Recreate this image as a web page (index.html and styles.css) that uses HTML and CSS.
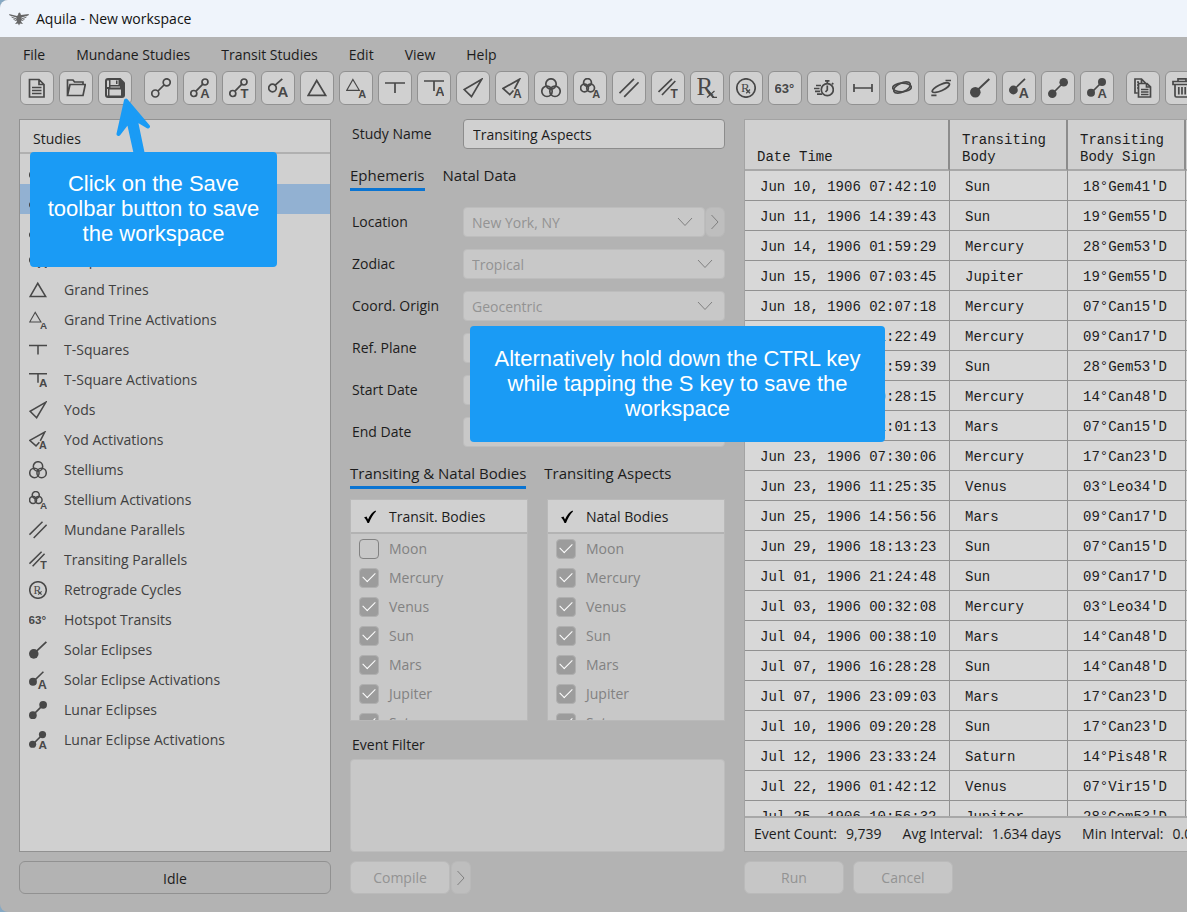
FILE: index.html
```html
<!DOCTYPE html>
<html lang="en">
<head>
    <meta charset="UTF-8">
    <meta name="viewport" content="width=device-width, initial-scale=1.0">
    <title>Aquila - New workspace</title>
    <link rel="stylesheet" href="styles.css">
</head>
<body>
    <!-- Icon set -->
    <svg class="icon-defs" aria-hidden="true">
        <symbol id="i-doc" viewBox="0 0 20 20"><path d="M2.5 1.5H12L17 6.500V19H2.500ZM12 1.500V6.500H17M5 9.500H14.500M5 12.500H14.500M5 15.500H14.500"/></symbol>
        <symbol id="i-open" viewBox="0 0 20 20"><path d="M1.500 17V2H7L8.500 4H17V6.500M1.500 17.500L4 6.500H19.300L17 17.500Z"/></symbol>
        <symbol id="i-save" viewBox="0 0 20 20"><path class="solid" d="M3 0H15.500L20 4.500V17A3 3 0 0 1 17 20H3A3 3 0 0 1 0 17V3A3 3 0 0 1 3 0Z"/><path class="paper" d="M2 2.500H4V9H2ZM5.500 2H13.500V7H5.500ZM2 11H3V17.500H2ZM4.500 11.500H16V17.500H4.500ZM5.500 8.500H15V9.500H5.500Z"/><path class="solid" d="M11 2.500H12.500V6H11Z"/></symbol>
        <symbol id="i-conj" viewBox="0 0 20 20"><circle cx="4.300" cy="15.500" r="3.500"/><circle cx="15.700" cy="4.300" r="3.500"/><path d="M7 13L13 7"/></symbol>
        <symbol id="i-conj-a" viewBox="0 0 20 20"><circle cx="3.800" cy="15.500" r="3"/><circle cx="15" cy="4" r="3"/><path d="M6 13.200L12.800 6.200"/><text x="10.300" y="19.800" font-size="13">A</text></symbol>
        <symbol id="i-conj-t" viewBox="0 0 20 20"><circle cx="3.800" cy="15.500" r="3"/><circle cx="15" cy="4" r="3"/><path d="M6 13.200L12.800 6.200"/><text x="11.500" y="19.800" font-size="13">T</text></symbol>
        <symbol id="i-open-a" viewBox="0 0 20 20"><circle cx="4.500" cy="10" r="3.800"/><path d="M7.200 7.200L14.300 .8"/><text x="9.400" y="19.300" font-size="15">A</text></symbol>
        <symbol id="i-tri" viewBox="0 0 20 20"><path d="M9.700 2.500L18.600 17.300H1.200Z"/></symbol>
        <symbol id="i-tri-a" viewBox="0 0 20 20"><path class="thin" d="M6.900 1.500L13.300 12.300H.8Z"/><text x="12.300" y="20" font-size="11">A</text></symbol>
        <symbol id="i-tsq" viewBox="0 0 20 20"><path d="M0 5H20M10 5V15"/></symbol>
        <symbol id="i-tsq-a" viewBox="0 0 20 20"><path d="M0 3H20M10 3V13"/><text x="11.200" y="17.800" font-size="13">A</text></symbol>
        <symbol id="i-yod" viewBox="0 0 20 20"><path d="M18.800 1.200L1.200 11.500L8.500 18.600Z"/></symbol>
        <symbol id="i-yod-a" viewBox="0 0 20 20"><path d="M11.500 12.500L7.800 16.600L1 10.500L17.500 1.200L12.500 11"/><text x="11" y="20" font-size="12">A</text></symbol>
        <symbol id="i-stel" viewBox="0 0 20 20"><circle cx="10" cy="6" r="5.200"/><circle cx="6" cy="13.300" r="5.200"/><circle cx="14" cy="13.300" r="5.200"/></symbol>
        <symbol id="i-stel-a" viewBox="0 0 20 20"><circle cx="7.500" cy="4.500" r="3.900"/><circle cx="4.500" cy="10" r="3.900"/><circle cx="10.600" cy="10" r="3.900"/><text x="12.300" y="20" font-size="11">A</text></symbol>
        <symbol id="i-par" viewBox="0 0 20 20"><path d="M.5 15.200L15 .8M5.200 18.800L19.600 4.300"/></symbol>
        <symbol id="i-par-t" viewBox="0 0 20 20"><path d="M.5 14L14 .8M4 17L17.300 3"/><text x="12.400" y="19.900" font-size="12">T</text></symbol>
        <symbol id="i-rx" viewBox="0 0 20 20"><text class="serif" x="-.5" y="17" font-size="25">R</text><path class="thin" d="M10 19.500L17.500 13M15.500 19.300H20"/><path class="bold" d="M11 13L16.500 19.500"/></symbol>
        <symbol id="i-retro" viewBox="0 0 20 20"><circle cx="10" cy="10" r="9.200"/><text class="serif" x="4.900" y="14.300" font-size="13">R</text><path class="thin" d="M10.200 15.200L14 11.500M10.500 11.800L14 15.200"/></symbol>
        <symbol id="i-deg" viewBox="0 0 20 20"><text x="-.5" y="14.500" font-size="13">63°</text></symbol>
        <symbol id="i-timer" viewBox="0 0 20 20"><circle cx="13.300" cy="11.700" r="6"/><path d="M11 2.800H15.500M13.300 3V5.500M18 5L19.300 6.300M13.300 7.500V12L11.500 14M2 7.500H7M0 10.500H5.500M1 13.300H6M3 16.200H8"/></symbol>
        <symbol id="i-span" viewBox="0 0 20 20"><path d="M1 6V14M19 6V14M1 10H19"/></symbol>
        <symbol id="i-orb" viewBox="0 0 20 20"><ellipse cx="10" cy="9.500" rx="9" ry="4.500" transform="rotate(-25 10 9.500)"/><ellipse cx="10" cy="9.500" rx="9.300" ry="4.300" transform="rotate(-2 10 9.500)"/></symbol>
        <symbol id="i-orb2" viewBox="0 0 20 20"><ellipse cx="9.800" cy="9.700" rx="9.400" ry="3" transform="rotate(-25 9.800 9.700)"/><path d="M14.500 2.500H20M.3 17.300H5.500"/></symbol>
        <symbol id="i-solar" viewBox="0 0 20 20"><circle class="dot" cx="5.300" cy="14.300" r="5.300"/><path class="bold" d="M6 13.500L19.300 1"/></symbol>
        <symbol id="i-solar-a" viewBox="0 0 20 20"><circle class="dot" cx="4.400" cy="12" r="4.400"/><path d="M5 11.500L16 .8"/><text x="9.700" y="19.500" font-size="14">A</text></symbol>
        <symbol id="i-lunar" viewBox="0 0 20 20"><circle class="dot" cx="4.300" cy="15.700" r="4.300"/><circle class="dot" cx="15.700" cy="4.300" r="4.300"/><path d="M4 16L16 4"/></symbol>
        <symbol id="i-lunar-a" viewBox="0 0 20 20"><circle class="dot" cx="4" cy="14.700" r="4"/><circle class="dot" cx="15" cy="4" r="4"/><path d="M4 15L15 4"/><text x="10.500" y="19.900" font-size="13">A</text></symbol>
        <symbol id="i-copy" viewBox="0 0 20 20"><path d="M4.500 15H2V1H8.500L12.500 5M8.500 1V5M5.500 5.500V19H17.500V8.800L14 5.500ZM13.500 5.500V9H17.500M8 11.500H15.500M8 14H15.500M8 16.500H15.500M4 4H6M4 7H5M4 10H5"/></symbol>
        <symbol id="i-trash" viewBox="0 0 20 20"><path d="M1 3.500H19V6.500H1ZM6 3V.8H14V3M3 6.500V17.500A1.500 1.500 0 0 0 4.500 19H15.500A1.500 1.500 0 0 0 17 17.500V6.500M6.800 9V16.500M10 9V16.500M13.200 9V16.500"/></symbol>
        <symbol id="i-down" viewBox="0 0 16 10"><path class="line" d="M1 1L8 8.500L15 1"/></symbol>
        <symbol id="i-right" viewBox="0 0 10 16"><path class="line" d="M1.500 1L8 8L1.500 15"/></symbol>
    </svg>

    <div class="window">
        <header class="title-bar">
            <svg class="logo" viewBox="0 0 20 14" aria-hidden="true">
                <path d="M0 2L8 4L9 3L9.500 1L11 .5L12 3L20 2L19.300 3.500L12.500 5.500L13 8L12 9.500L14 12L11 11.500L10 13.500L9 11.500L6 12L8 9.500L7 8L7.500 5.500L.7 3.500Z"/>
                <path d="M2 4.500L7 6.200V7.200L3 5.800ZM18 4.500L13 6.200V7.200L17 5.800ZM4 6.800L7 8V9L5 8ZM16 6.800L13 8V9L15 8Z"/>
            </svg>
            <span>Aquila - New workspace</span>
        </header>

        <nav class="menu-bar">
            <button type="button">File</button>
            <button type="button">Mundane Studies</button>
            <button type="button">Transit Studies</button>
            <button type="button">Edit</button>
            <button type="button">View</button>
            <button type="button">Help</button>
        </nav>

        <div class="toolbar">
            <div class="tool-group">
                <button type="button" aria-label="New"><svg><use href="#i-doc"/></svg></button>
                <button type="button" aria-label="Open"><svg><use href="#i-open"/></svg></button>
                <button type="button" aria-label="Save"><svg><use href="#i-save"/></svg></button>
            </div>
            <div class="tool-group">
                <button type="button" aria-label="Aspects"><svg><use href="#i-conj"/></svg></button>
                <button type="button" aria-label="Aspect activations"><svg><use href="#i-conj-a"/></svg></button>
                <button type="button" aria-label="Transiting aspects"><svg><use href="#i-conj-t"/></svg></button>
                <button type="button" aria-label="Midpoint activations"><svg><use href="#i-open-a"/></svg></button>
                <button type="button" aria-label="Grand trines"><svg><use href="#i-tri"/></svg></button>
                <button type="button" aria-label="Grand trine activations"><svg><use href="#i-tri-a"/></svg></button>
                <button type="button" aria-label="T-squares"><svg><use href="#i-tsq"/></svg></button>
                <button type="button" aria-label="T-square activations"><svg><use href="#i-tsq-a"/></svg></button>
                <button type="button" aria-label="Yods"><svg><use href="#i-yod"/></svg></button>
                <button type="button" aria-label="Yod activations"><svg><use href="#i-yod-a"/></svg></button>
                <button type="button" aria-label="Stelliums"><svg><use href="#i-stel"/></svg></button>
                <button type="button" aria-label="Stellium activations"><svg><use href="#i-stel-a"/></svg></button>
                <button type="button" aria-label="Mundane parallels"><svg><use href="#i-par"/></svg></button>
                <button type="button" aria-label="Transiting parallels"><svg><use href="#i-par-t"/></svg></button>
                <button type="button" aria-label="Retrogrades"><svg><use href="#i-rx"/></svg></button>
                <button type="button" aria-label="Retrograde cycles"><svg><use href="#i-retro"/></svg></button>
                <button type="button" aria-label="Hotspot transits"><svg><use href="#i-deg"/></svg></button>
                <button type="button" aria-label="Speed"><svg><use href="#i-timer"/></svg></button>
                <button type="button" aria-label="Distance"><svg><use href="#i-span"/></svg></button>
                <button type="button" aria-label="Latitude"><svg><use href="#i-orb"/></svg></button>
                <button type="button" aria-label="Declination"><svg><use href="#i-orb2"/></svg></button>
                <button type="button" aria-label="Solar eclipses"><svg><use href="#i-solar"/></svg></button>
                <button type="button" aria-label="Solar eclipse activations"><svg><use href="#i-solar-a"/></svg></button>
                <button type="button" aria-label="Lunar eclipses"><svg><use href="#i-lunar"/></svg></button>
                <button type="button" aria-label="Lunar eclipse activations"><svg><use href="#i-lunar-a"/></svg></button>
            </div>
            <div class="tool-group">
                <button type="button" aria-label="Copy"><svg><use href="#i-copy"/></svg></button>
                <button type="button" aria-label="Delete"><svg><use href="#i-trash"/></svg></button>
            </div>
        </div>

        <main class="workspace">
            <!-- Studies -->
            <section class="column">
                <div class="panel studies">
                    <h2>Studies</h2>
                    <ul>
                        <li><svg><use href="#i-conj"/></svg>Mundane Aspects</li>
                        <li class="selected"><svg><use href="#i-conj-t"/></svg>Transiting Aspects</li>
                        <li><svg><use href="#i-conj-a"/></svg>Aspect Activations</li>
                        <li><svg><use href="#i-open-a"/></svg>Midpoint Activations</li>
                        <li><svg><use href="#i-tri"/></svg>Grand Trines</li>
                        <li><svg><use href="#i-tri-a"/></svg>Grand Trine Activations</li>
                        <li><svg><use href="#i-tsq"/></svg>T-Squares</li>
                        <li><svg><use href="#i-tsq-a"/></svg>T-Square Activations</li>
                        <li><svg><use href="#i-yod"/></svg>Yods</li>
                        <li><svg><use href="#i-yod-a"/></svg>Yod Activations</li>
                        <li><svg><use href="#i-stel"/></svg>Stelliums</li>
                        <li><svg><use href="#i-stel-a"/></svg>Stellium Activations</li>
                        <li><svg><use href="#i-par"/></svg>Mundane Parallels</li>
                        <li><svg><use href="#i-par-t"/></svg>Transiting Parallels</li>
                        <li><svg><use href="#i-retro"/></svg>Retrograde Cycles</li>
                        <li><svg><use href="#i-deg"/></svg>Hotspot Transits</li>
                        <li><svg><use href="#i-solar"/></svg>Solar Eclipses</li>
                        <li><svg><use href="#i-solar-a"/></svg>Solar Eclipse Activations</li>
                        <li><svg><use href="#i-lunar"/></svg>Lunar Eclipses</li>
                        <li><svg><use href="#i-lunar-a"/></svg>Lunar Eclipse Activations</li>
                    </ul>
                </div>
                <div class="status">Idle</div>
            </section>

            <!-- Study settings -->
            <form class="column settings">
                <div class="field">
                    <label for="study-name">Study Name</label>
                    <input type="text" id="study-name" value="Transiting Aspects">
                </div>
                <div class="tabs">
                    <button type="button" class="active">Ephemeris</button>
                    <button type="button">Natal Data</button>
                </div>
                <div class="fields">
                    <div class="field">
                        <label for="location">Location</label>
                        <div class="with-button">
                            <div class="select"><select id="location" disabled><option>New York, NY</option></select><svg><use href="#i-down"/></svg></div>
                            <button type="button" class="more" aria-label="Edit location" disabled><svg><use href="#i-right"/></svg></button>
                        </div>
                    </div>
                    <div class="field">
                        <label for="zodiac">Zodiac</label>
                        <div class="select"><select id="zodiac" disabled><option>Tropical</option></select><svg><use href="#i-down"/></svg></div>
                    </div>
                    <div class="field">
                        <label for="origin">Coord. Origin</label>
                        <div class="select"><select id="origin" disabled><option>Geocentric</option></select><svg><use href="#i-down"/></svg></div>
                    </div>
                    <div class="field">
                        <label for="plane">Ref. Plane</label>
                        <div class="select"><select id="plane" disabled><option>Ecliptic</option></select><svg><use href="#i-down"/></svg></div>
                    </div>
                    <div class="field">
                        <label for="start-date">Start Date</label>
                        <input type="text" id="start-date" disabled>
                    </div>
                    <div class="field">
                        <label for="end-date">End Date</label>
                        <input type="text" id="end-date" disabled>
                    </div>
                </div>
                <div class="tabs">
                    <button type="button" class="active">Transiting &amp; Natal Bodies</button>
                    <button type="button">Transiting Aspects</button>
                </div>
                <div class="bodies">
                    <div class="checklist">
                        <h3><svg viewBox="0 0 14 14"><path d="M1 7.500L3.500 6.500L5 9.500C7 5 9 2.500 12.500 .5L13 1.500C10 4.500 8 8 6 13H4.500C3.500 10.500 2.500 8.500 1 7.500Z"/></svg>Transit. Bodies</h3>
                        <label><input type="checkbox" disabled>Moon</label>
                        <label><input type="checkbox" checked disabled>Mercury</label>
                        <label><input type="checkbox" checked disabled>Venus</label>
                        <label><input type="checkbox" checked disabled>Sun</label>
                        <label><input type="checkbox" checked disabled>Mars</label>
                        <label><input type="checkbox" checked disabled>Jupiter</label>
                        <label><input type="checkbox" checked disabled>Saturn</label>
                    </div>
                    <div class="checklist">
                        <h3><svg viewBox="0 0 14 14"><path d="M1 7.500L3.500 6.500L5 9.500C7 5 9 2.500 12.500 .5L13 1.500C10 4.500 8 8 6 13H4.500C3.500 10.500 2.500 8.500 1 7.500Z"/></svg>Natal Bodies</h3>
                        <label><input type="checkbox" checked disabled>Moon</label>
                        <label><input type="checkbox" checked disabled>Mercury</label>
                        <label><input type="checkbox" checked disabled>Venus</label>
                        <label><input type="checkbox" checked disabled>Sun</label>
                        <label><input type="checkbox" checked disabled>Mars</label>
                        <label><input type="checkbox" checked disabled>Jupiter</label>
                        <label><input type="checkbox" checked disabled>Saturn</label>
                    </div>
                </div>
                <label class="filter-label" for="filter">Event Filter</label>
                <textarea id="filter" disabled></textarea>
                <div class="actions joined">
                    <button type="button" class="action" disabled>Compile</button>
                    <button type="button" class="more" aria-label="Compile options" disabled><svg><use href="#i-right"/></svg></button>
                </div>
            </form>

            <!-- Results -->
            <section class="column results">
                <div class="panel">
                    <div class="table-wrap">
                        <table>
                            <colgroup><col class="c-date"><col class="c-body"><col class="c-body"><col></colgroup>
                            <thead>
                                <tr><th>Date Time</th><th>Transiting<br>Body</th><th>Transiting<br>Body Sign</th><th></th></tr>
                            </thead>
                            <tbody>
                                <tr><td>Jun 10, 1906 07:42:10</td><td>Sun</td><td>18°Gem41'D</td><td></td></tr>
                                <tr><td>Jun 11, 1906 14:39:43</td><td>Sun</td><td>19°Gem55'D</td><td></td></tr>
                                <tr><td>Jun 14, 1906 01:59:29</td><td>Mercury</td><td>28°Gem53'D</td><td></td></tr>
                                <tr><td>Jun 15, 1906 07:03:45</td><td>Jupiter</td><td>19°Gem55'D</td><td></td></tr>
                                <tr><td>Jun 18, 1906 02:07:18</td><td>Mercury</td><td>07°Can15'D</td><td></td></tr>
                                <tr><td>Jun 19, 1906 01:22:49</td><td>Mercury</td><td>09°Can17'D</td><td></td></tr>
                                <tr><td>Jun 20, 1906 22:59:39</td><td>Sun</td><td>28°Gem53'D</td><td></td></tr>
                                <tr><td>Jun 21, 1906 20:28:15</td><td>Mercury</td><td>14°Can48'D</td><td></td></tr>
                                <tr><td>Jun 22, 1906 11:01:13</td><td>Mars</td><td>07°Can15'D</td><td></td></tr>
                                <tr><td>Jun 23, 1906 07:30:06</td><td>Mercury</td><td>17°Can23'D</td><td></td></tr>
                                <tr><td>Jun 23, 1906 11:25:35</td><td>Venus</td><td>03°Leo34'D</td><td></td></tr>
                                <tr><td>Jun 25, 1906 14:56:56</td><td>Mars</td><td>09°Can17'D</td><td></td></tr>
                                <tr><td>Jun 29, 1906 18:13:23</td><td>Sun</td><td>07°Can15'D</td><td></td></tr>
                                <tr><td>Jul 01, 1906 21:24:48</td><td>Sun</td><td>09°Can17'D</td><td></td></tr>
                                <tr><td>Jul 03, 1906 00:32:08</td><td>Mercury</td><td>03°Leo34'D</td><td></td></tr>
                                <tr><td>Jul 04, 1906 00:38:10</td><td>Mars</td><td>14°Can48'D</td><td></td></tr>
                                <tr><td>Jul 07, 1906 16:28:28</td><td>Sun</td><td>14°Can48'D</td><td></td></tr>
                                <tr><td>Jul 07, 1906 23:09:03</td><td>Mars</td><td>17°Can23'D</td><td></td></tr>
                                <tr><td>Jul 10, 1906 09:20:28</td><td>Sun</td><td>17°Can23'D</td><td></td></tr>
                                <tr><td>Jul 12, 1906 23:33:24</td><td>Saturn</td><td>14°Pis48'R</td><td></td></tr>
                                <tr><td>Jul 22, 1906 01:42:12</td><td>Venus</td><td>07°Vir15'D</td><td></td></tr>
                                <tr><td>Jul 25, 1906 10:56:32</td><td>Jupiter</td><td>28°Gem53'D</td><td></td></tr>
                            </tbody>
                        </table>
                    </div>
                    <dl class="summary">
                        <div><dt>Event Count:</dt><dd>9,739</dd></div>
                        <div><dt>Avg Interval:</dt><dd>1.634 days</dd></div>
                        <div><dt>Min Interval:</dt><dd>0.002 days</dd></div>
                    </dl>
                </div>
                <div class="actions">
                    <button type="button" class="action" disabled>Run</button>
                    <button type="button" class="action" disabled>Cancel</button>
                </div>
            </section>
        </main>

        <!-- Callouts -->
        <svg class="arrow" viewBox="0 0 36 58" aria-hidden="true"><path d="M12 3.500L4.500 37L14.500 24L22 58H29L21.500 22L34 29.500Z"/></svg>
        <div class="callout save-tip">Click on the Save toolbar button to save the workspace</div>
        <div class="callout key-tip">Alternatively hold down the CTRL key while tapping the S key to save the workspace</div>
    </div>
</body>
</html>
```

FILE: styles.css
```css
* {
    box-sizing: border-box;
}
body {
    margin: 0;
    background-color: #86a9c4;
    font-family: "Open Sans", "Noto Sans", sans-serif;
    font-size: 14px;
    line-height: 20px;
    color: #1c1c1c;
}
h2, h3, ul, dl, dd {
    margin: 0;
    padding: 0;
    font-size: inherit;
    font-weight: normal;
}
button, input, select, textarea {
    font: inherit;
    color: inherit;
    margin: 0;
}
.icon-defs {
    display: none;
}
.window {
    position: relative;
    display: flex;
    flex-direction: column;
    height: 100vh;
    overflow: hidden;
    border-radius: 8px 0 0 8px;
    background-color: #b3b3b3;
}

/* Title and menus */
.title-bar {
    display: flex;
    flex: none;
    align-items: center;
    gap: 7px;
    height: 37px;
    padding-left: 9px;
    background-color: #eff4fb;
    color: #111;
}
.logo {
    width: 20px;
    height: 14px;
    fill: #666;
}
.menu-bar {
    display: flex;
    flex: none;
    gap: 31px;
    padding: 8px 23px 6px;
}
.menu-bar button {
    padding: 0;
    border: none;
    background: none;
}

/* Toolbar */
.toolbar {
    display: flex;
    flex: none;
    gap: 12px;
    padding-left: 20px;
}
.tool-group {
    display: flex;
    gap: 5px;
}
.tool-group button {
    display: flex;
    align-items: center;
    justify-content: center;
    width: 34px;
    height: 34px;
    padding: 0;
    border: 1px solid #919191;
    border-radius: 6px;
    background-color: #d0d0d0;
}
.tool-group svg {
    width: 20px;
    height: 20px;
}
symbol {
    overflow: visible;
}
symbol path, symbol circle, symbol ellipse {
    fill: none;
    stroke: #484848;
    stroke-width: 1.7;
}
symbol text {
    font-family: "Liberation Sans", Arial, sans-serif;
    font-weight: bold;
    fill: #484848;
}
symbol .serif {
    font-family: "Liberation Serif", serif;
    font-weight: normal;
}
symbol .thin {
    stroke-width: 1.2;
}
symbol .bold {
    stroke-width: 2;
}
symbol .dot, symbol .solid {
    fill: #484848;
    stroke: none;
}
symbol .paper {
    fill: #d0d0d0;
    stroke: none;
}
symbol .line {
    stroke: #808080;
    stroke-width: 1;
}

/* Main columns */
.workspace {
    display: grid;
    grid-template-columns: 312px 375px minmax(0, 1fr);
    gap: 19px;
    flex: 1;
    min-height: 0;
    padding: 14px 0 18px 19px;
}
.column {
    display: flex;
    flex-direction: column;
    min-height: 0;
}
.panel {
    flex: 1;
    min-height: 0;
    border: 1px solid #919191;
    background-color: #d0d0d0;
}
.studies h2 {
    height: 34px;
    padding: 9px 13px 0;
    border-bottom: 2px solid #b0b0b0;
}
.studies ul {
    list-style: none;
}
.studies li {
    display: flex;
    align-items: center;
    gap: 17px;
    height: 30px;
    padding: 2px 0 0 9px;
    color: #404040;
}
.studies li svg {
    width: 18px;
    height: 18px;
}
.studies .selected {
    background-color: #92b1d2;
}
.status {
    height: 33px;
    margin-top: 9px;
    border: 1px solid #919191;
    border-radius: 6px;
    line-height: 33px;
    text-align: center;
}

/* Settings form */
.field {
    display: grid;
    grid-template-columns: 113px 1fr;
    align-items: center;
}
.field label {
    padding-left: 2px;
}
.field input, .select select {
    width: 100%;
    height: 30px;
    padding: 1px 9px 0;
    border: 1px solid #8c8c8c;
    border-radius: 4px;
    background-color: #d0d0d0;
}
.field input:disabled, .select select:disabled {
    border-color: #bdbdbd;
    background-color: #c8c8c8;
    color: #939393;
    opacity: 1;
}
.select {
    display: grid;
    flex: 1;
    align-items: center;
}
.select select {
    grid-area: 1 / 1;
    appearance: none;
    padding: 2px 8px 0;
}
.select svg {
    grid-area: 1 / 1;
    justify-self: end;
    width: 16px;
    height: 10px;
    margin-right: 12px;
    pointer-events: none;
}
.with-button {
    display: flex;
}
.more {
    display: flex;
    align-items: center;
    justify-content: center;
    width: 20px;
    padding: 0;
    border: 1px solid #b9b9b9;
    border-radius: 6px;
    background-color: #bebebe;
}
.more svg {
    width: 10px;
    height: 16px;
}
.tabs {
    display: flex;
    gap: 18px;
    margin-top: 15px;
    font-size: 15px;
}
.tabs button {
    height: 27px;
    padding: 0 0 2px;
    border: none;
    border-bottom: 3px solid transparent;
    background: none;
}
.tabs .active {
    border-bottom-color: #0a74d2;
}
.fields {
    display: grid;
    gap: 12px;
    margin-top: 16px;
}
.bodies {
    display: grid;
    grid-template-columns: 1fr 1fr;
    gap: 19px;
    margin-top: 10px;
}
.checklist {
    height: 222px;
    overflow: hidden;
    border: 1px solid #b9b9b9;
    background-color: #c8c8c8;
    color: #828282;
}
.checklist h3 {
    display: flex;
    align-items: center;
    gap: 12px;
    height: 34px;
    padding: 2px 0 0 12px;
    border-bottom: 2px solid #b3b3b3;
    background-color: #d0d0d0;
    color: #1c1c1c;
}
.checklist h3 svg {
    width: 14px;
    height: 14px;
}
.checklist label {
    display: flex;
    align-items: center;
    gap: 10px;
    height: 29px;
    padding-left: 8px;
}
.checklist input {
    display: grid;
    place-items: center;
    appearance: none;
    width: 20px;
    height: 20px;
    border: 1px solid #828282;
    border-radius: 4px;
}
.checklist input:checked {
    border-color: #b0b0b0;
    background-color: #9c9c9c;
}
.checklist input:checked::after {
    content: "";
    width: 11px;
    height: 6px;
    margin-bottom: 4px;
    border-left: 1px solid #fff;
    border-bottom: 1px solid #fff;
    transform: rotate(-45deg);
}
.filter-label {
    margin: 14px 0 4px 2px;
}
textarea {
    flex: 1;
    min-height: 0;
    resize: none;
    border: 1px solid #bdbdbd;
    border-radius: 4px;
    background-color: #c8c8c8;
}
.actions {
    display: flex;
    gap: 9px;
    height: 33px;
    margin-top: 9px;
}
.joined {
    gap: 1px;
}
.action {
    width: 100px;
    border: 1px solid #bababa;
    border-radius: 6px;
    background-color: #c6c6c6;
    color: #939393;
}

/* Results table */
.results .panel {
    display: flex;
    flex-direction: column;
    border-color: #a3a3a3;
    border-right: none;
}
.table-wrap {
    flex: 1;
    min-height: 0;
    overflow: hidden;
}
table {
    width: 100%;
    table-layout: fixed;
    border-collapse: separate;
    border-spacing: 0;
    font-family: "Liberation Mono", "Courier New", monospace;
}
.c-date {
    width: 205px;
}
.c-body {
    width: 118px;
}
th, td {
    text-align: left;
    white-space: nowrap;
    border-right: 1px solid #919191;
}
th {
    height: 51px;
    padding: 0 0 3px 12px;
    border-right: 2px solid #8c8c8c;
    border-bottom: 2px solid #a8a8a8;
    font-weight: normal;
    line-height: 17px;
    vertical-align: bottom;
}
td {
    height: 30px;
    padding: 2px 0 0 15px;
    border-bottom: 1px solid #919191;
    background-color: #d8d8d8;
}
th:last-child, td:last-child {
    padding: 0;
    border-right: none;
}
.summary {
    display: flex;
    gap: 21px;
    height: 35px;
    padding: 6px 0 0 9px;
    overflow: hidden;
    border-top: 2px solid #a8a8a8;
    white-space: nowrap;
}
.summary div {
    display: flex;
    gap: 9px;
}

/* Callouts */
.callout {
    position: absolute;
    display: flex;
    align-items: center;
    border-radius: 4px;
    background-color: #1a9bf5;
    color: #fff;
    font-family: "Liberation Sans", Arial, sans-serif;
    font-size: 22px;
    line-height: 25px;
    text-align: center;
}
.save-tip {
    left: 30px;
    top: 152px;
    width: 247px;
    height: 115px;
    padding: 0 12px 2px;
}
.key-tip {
    left: 470px;
    top: 326px;
    width: 415px;
    height: 116px;
    padding: 0 20px 2px;
}
.arrow {
    position: absolute;
    left: 114px;
    top: 97px;
    width: 36px;
    height: 58px;
    fill: #1a9bf5;
    stroke: #1a9bf5;
    stroke-width: 4;
    stroke-linejoin: round;
}
```
